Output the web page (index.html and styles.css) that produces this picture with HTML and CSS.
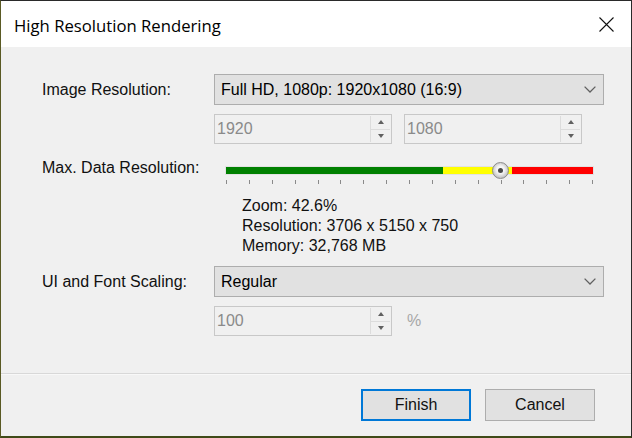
FILE: index.html
```html
<!DOCTYPE html>
<html>
<head>
<meta charset="utf-8">
<title>High Resolution Rendering</title>
<link rel="stylesheet" href="styles.css">
</head>
<body>
<div class="window">
  <div class="titlebar">
    <span class="title">High Resolution Rendering</span>
    <svg class="close" width="15" height="15" viewBox="0 0 15 15"><path d="M0.5 0.5L14.5 14.5M14.5 0.5L0.5 14.5" stroke="#111" stroke-width="1.1" fill="none"/></svg>
  </div>
  <div class="content">
    <div class="row">
      <div class="label">Image Resolution:</div>
      <div class="combo">
        <span>Full HD, 1080p: 1920x1080 (16:9)</span>
        <svg class="chev" width="12" height="7" viewBox="0 0 12 7"><path d="M0.6 0.6L6 6L11.4 0.6" stroke="#606060" stroke-width="1.3" fill="none"/></svg>
      </div>
    </div>
    <div class="subrow">
      <div class="spin">
        <span class="spin-val">1920</span>
        <div class="spin-btns"><div class="spin-b"><i class="tri-up"></i></div><div class="spin-b down"><i class="tri-down"></i></div></div>
      </div>
      <div class="spin">
        <span class="spin-val">1080</span>
        <div class="spin-btns"><div class="spin-b"><i class="tri-up"></i></div><div class="spin-b down"><i class="tri-down"></i></div></div>
      </div>
    </div>
    <div class="row slider-row">
      <div class="label tall">Max. Data Resolution:</div>
      <div class="slider">
        <div class="track">
          <div class="seg green" style="width:217px"></div>
          <div class="seg yellow" style="width:69px"></div>
          <div class="seg red" style="flex:1"></div>
        </div>
        <div class="thumb"><div class="thumb-dot"></div></div>
        <div class="ticks">
          <i></i><i></i><i></i><i></i><i></i><i></i><i></i><i></i><i></i><i></i><i></i><i></i><i></i><i></i><i></i><i></i><i></i>
        </div>
      </div>
    </div>
    <div class="info">
      <div>Zoom: 42.6%</div>
      <div>Resolution: 3706 x 5150 x 750</div>
      <div>Memory: 32,768 MB</div>
    </div>
    <div class="row row2">
      <div class="label">UI and Font Scaling:</div>
      <div class="combo">
        <span>Regular</span>
        <svg class="chev" width="12" height="7" viewBox="0 0 12 7"><path d="M0.6 0.6L6 6L11.4 0.6" stroke="#606060" stroke-width="1.3" fill="none"/></svg>
      </div>
    </div>
    <div class="subrow">
      <div class="spin">
        <span class="spin-val">100</span>
        <div class="spin-btns"><div class="spin-b"><i class="tri-up"></i></div><div class="spin-b down"><i class="tri-down"></i></div></div>
      </div>
      <span class="pct">%</span>
    </div>
  </div>
  <div class="sep"></div>
  <div class="footer">
    <div class="btn default">Finish</div>
    <div class="btn">Cancel</div>
  </div>
</div>
</body>
</html>
```
FILE: styles.css
```css
html, body {
  margin: 0;
  padding: 0;
}
body {
  width: 632px;
  height: 438px;
  overflow: hidden;
  background: #4f5a22;
  font-family: "Liberation Sans", Arial, sans-serif;
  font-size: 16px;
  color: #000;
}
.window {
  box-sizing: border-box;
  width: 632px;
  height: 438px;
  border: 1px solid #2a2a2a;
  border-left-color: #5a5a24;
  border-bottom: 2px solid #3f4a18;
  background: #f0f0f0;
  display: flex;
  flex-direction: column;
}
.titlebar {
  flex: none;
  height: 46px;
  background: #fff;
  display: flex;
  align-items: center;
  justify-content: space-between;
  padding: 0 17px 0 13px;
}
.title {
  font-family: "Open Sans", "Noto Sans", sans-serif;
  font-size: 16.7px;
  color: #000;
  margin-top: 2px;
}
.close {
  display: block;
  margin-top: 1px;
}
.content {
  flex: 1;
  padding: 27px 0 0 41px;
}
.row {
  display: flex;
  align-items: center;
}
.label {
  flex: none;
  width: 172px;
  color: #111;
}
.label.tall {
  line-height: 18px;
}
.combo {
  box-sizing: border-box;
  width: 390px;
  height: 31px;
  background: #e1e1e1;
  border: 1px solid #adadad;
  display: flex;
  align-items: center;
  justify-content: space-between;
  padding: 0 7px 0 6px;
}
.chev {
  display: block;
}
.subrow {
  display: flex;
  align-items: center;
  gap: 12px;
  margin: 9px 0 0 172px;
}
.spin {
  box-sizing: border-box;
  width: 178px;
  height: 30px;
  border: 1px solid #c8c8c8;
  background: #f0f0f0;
  display: flex;
}
.spin-val {
  flex: 1;
  padding-left: 2px;
  line-height: 28px;
  color: #8a8a8a;
}
.spin-btns {
  width: 19px;
  margin: 1px 1px 1px 0;
  display: flex;
  flex-direction: column;
  border-left: 1px solid #dcdcdc;
}
.spin-b {
  flex: 1;
  display: flex;
  align-items: center;
  justify-content: center;
}
.spin-b.down {
  border-top: 1px solid #dcdcdc;
}
.tri-up {
  width: 0;
  height: 0;
  border-left: 3.5px solid transparent;
  border-right: 3.5px solid transparent;
  border-bottom: 4px solid #606060;
}
.tri-down {
  width: 0;
  height: 0;
  border-left: 3.5px solid transparent;
  border-right: 3.5px solid transparent;
  border-top: 4px solid #606060;
}
.pct {
  padding-left: 3px;
  color: #a6a6a6;
}
.slider-row {
  align-items: flex-start;
  margin-top: 15px;
}
.slider {
  position: relative;
  width: 367px;
  height: 26px;
  margin: 1px 0 0 12px;
}
.track {
  margin-top: 7px;
  height: 7px;
  display: flex;
  box-shadow: 0 0 0 1px #e2e2e2;
}
.seg.green { background: #008000; }
.seg.yellow { background: #ffff00; }
.seg.red { background: #ff0000; }
.thumb {
  position: absolute;
  left: 266px;
  top: 2px;
  box-sizing: border-box;
  width: 17px;
  height: 17px;
  border-radius: 50%;
  border: 1px solid #8c8c8c;
  background: radial-gradient(circle at 50% 45%, #ffffff 0%, #f2f2f2 35%, #c4c4c4 72%, #a0a0a0 100%);
  display: flex;
  align-items: center;
  justify-content: center;
}
.thumb-dot {
  width: 5px;
  height: 5px;
  border-radius: 50%;
  background: #4a4a4a;
}
.ticks {
  margin-top: 6px;
  height: 4px;
  display: flex;
  justify-content: space-between;
}
.ticks i {
  width: 1px;
  height: 4px;
  background: #8a8a8a;
}
.info {
  margin: 10px 0 0 200px;
  line-height: 20px;
  color: #111;
}
.row2 {
  margin-top: 10px;
}
.sep {
  flex: none;
  height: 1px;
  background: #d8d8d8;
  border-bottom: 1px solid #f8f8f8;
}
.footer {
  flex: none;
  height: 61px;
  box-sizing: border-box;
  display: flex;
  justify-content: flex-end;
  align-items: flex-start;
  gap: 14px;
  padding: 14px 36px 0 0;
}
.btn {
  box-sizing: border-box;
  width: 110px;
  height: 32px;
  background: #e1e1e1;
  border: 1px solid #adadad;
  display: flex;
  align-items: center;
  justify-content: center;
  color: #111;
}
.btn.default {
  border: 2px solid #0078d7;
}
```
